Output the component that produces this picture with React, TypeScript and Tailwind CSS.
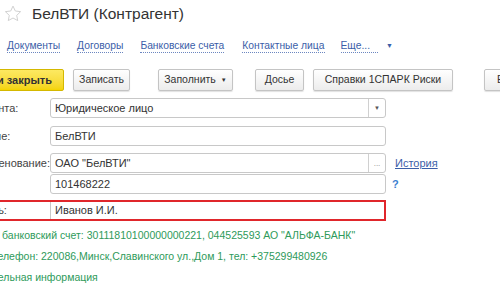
const font = { fontFamily: '"Liberation Sans", Arial, sans-serif' };

function NavLink({ children, className = '' }: { children: React.ReactNode; className?: string }) {
  return (
    <span className={`shrink-0 text-[#3b5ea8] text-[10.3px] leading-[13px] border-b border-dotted border-[#6b86c0] ${className}`}>{children}</span>
  );
}

function Btn({ children, className = '' }: { children: React.ReactNode; className?: string }) {
  return (
    <div className={`shrink-0 h-[22px] flex items-center justify-center rounded-[2px] border border-[#c4c4c4] bg-gradient-to-b from-white to-[#ececec] text-[10.5px] text-[#333] shadow-[0_1px_1px_rgba(0,0,0,0.12)] ${className}`}>
      {children}
    </div>
  );
}

function Field({ label, value, children, className = '' }: { label: string; value: string; children?: React.ReactNode; className?: string }) {
  return (
    <div className={`flex items-center shrink-0 ${className}`}>
      <div className="w-[119px] shrink-0 text-[11px] text-[#444]">{label}</div>
      <div className="w-[336px] shrink-0 h-[20px] flex items-center border border-[#c8c8c8] rounded-[3px] bg-white">
        <span className="flex-1 pl-[4px] text-[11px] text-[#333]">{value}</span>
        {children}
      </div>
    </div>
  );
}

export default function App() {
  return (
    <div className="w-[500px] h-[300px] overflow-hidden bg-white relative" style={font}>
      <div className="flex items-center pl-[4px] pt-[1px] h-[26px]">
        <svg width="18" height="17" viewBox="0 0 24 23" className="shrink-0">
          <path d="M12 1.5l3.1 6.6 7.2.9-5.3 5 1.4 7.1L12 17.6l-6.4 3.5L7 14l-5.3-5 7.2-.9z" fill="none" stroke="#cfcfcf" strokeWidth="1.3" strokeLinejoin="round" />
        </svg>
        <span className="ml-[10px] text-[15.5px] text-[#333] leading-[20px]">БелВТИ (Контрагент)</span>
      </div>

      <div className="flex items-center pl-[7px] mt-[12px] h-[16px]">
        <NavLink>Документы</NavLink>
        <NavLink className="ml-[17px]">Договоры</NavLink>
        <NavLink className="ml-[17px]">Банковские счета</NavLink>
        <NavLink className="ml-[18px]">Контактные лица</NavLink>
        <NavLink className="ml-[16px] pr-[8px]">Еще...</NavLink>
        <span className="ml-[8px] text-[#3b5ea8] text-[7px]">▼</span>
      </div>

      <div className="flex items-center -ml-[80px] mt-[15px]">
        <div className="shrink-0 w-[144px] h-[22px] flex items-center justify-end pr-[11px] rounded-[2px] border border-[#d4b800] bg-gradient-to-b from-[#fde961] to-[#f4d400] text-[11px] font-bold text-[#333]">
          Записать и закрыть
        </div>
        <Btn className="ml-[9px] w-[57px]">Записать</Btn>
        <Btn className="ml-[28px] w-[75px]">
          Заполнить
          <span className="ml-[5px] text-[6px]">▼</span>
        </Btn>
        <Btn className="ml-[22px] w-[49px]">Досье</Btn>
        <Btn className="ml-[9px] w-[140px]">Справки 1СПАРК Риски</Btn>
        <Btn className="ml-[31px] w-[60px] justify-start pl-[12px]">Еще</Btn>
      </div>

      <div className="-ml-[69px] mt-[7px] flex flex-col">
        <Field label="Вид контрагента:" value="Юридическое лицо">
          <div className="w-[17px] h-full border-l border-[#d0d0d0] flex items-center justify-center">
            <span className="text-[6px] text-[#555]">▼</span>
          </div>
        </Field>
        <Field label="Наименование:" value="БелВТИ" className="mt-[8px]" />
        <div className="flex items-center mt-[7px]">
          <Field label="Полное наименование:" value={'ОАО "БелВТИ"'}>
            <div className="w-[17px] h-full border-l border-[#d0d0d0] flex items-end justify-center pb-[4px]">
              <span className="text-[8px] leading-[8px] text-[#888]">...</span>
            </div>
          </Field>
          <span className="ml-[9px] text-[11px] text-[#3b5ea8] underline">История</span>
        </div>
        <div className="flex items-center mt-[1px]">
          <Field label="ИНН:" value="101468222" />
          <span className="ml-[6px] text-[11px] font-bold text-[#3b7fd0]">?</span>
        </div>
        <div className="mt-[6px] w-[455px] h-[21px] flex items-center border-2 border-[#e0262b]">
          <div className="w-[117px] shrink-0 text-[11px] text-[#444]">Руководитель:</div>
          <div className="flex-1 h-full border-l border-[#c8c8c8] pl-[4px] flex items-center text-[11px] text-[#333]">Иванов И.И.</div>
        </div>
      </div>

      <div className="-ml-[49px] mt-[4px] flex flex-col text-[10.5px] text-[#2e9a5a] leading-[21px]">
        <div>Основной банковский счет: 30111810100000000221, 044525593 АО "АЛЬФА-БАНК"</div>
        <div>Адрес и телефон: 220086,Минск,Славинского ул.,Дом 1, тел: +375299480926</div>
        <div>Дополнительная информация</div>
      </div>
    </div>
  );
}
